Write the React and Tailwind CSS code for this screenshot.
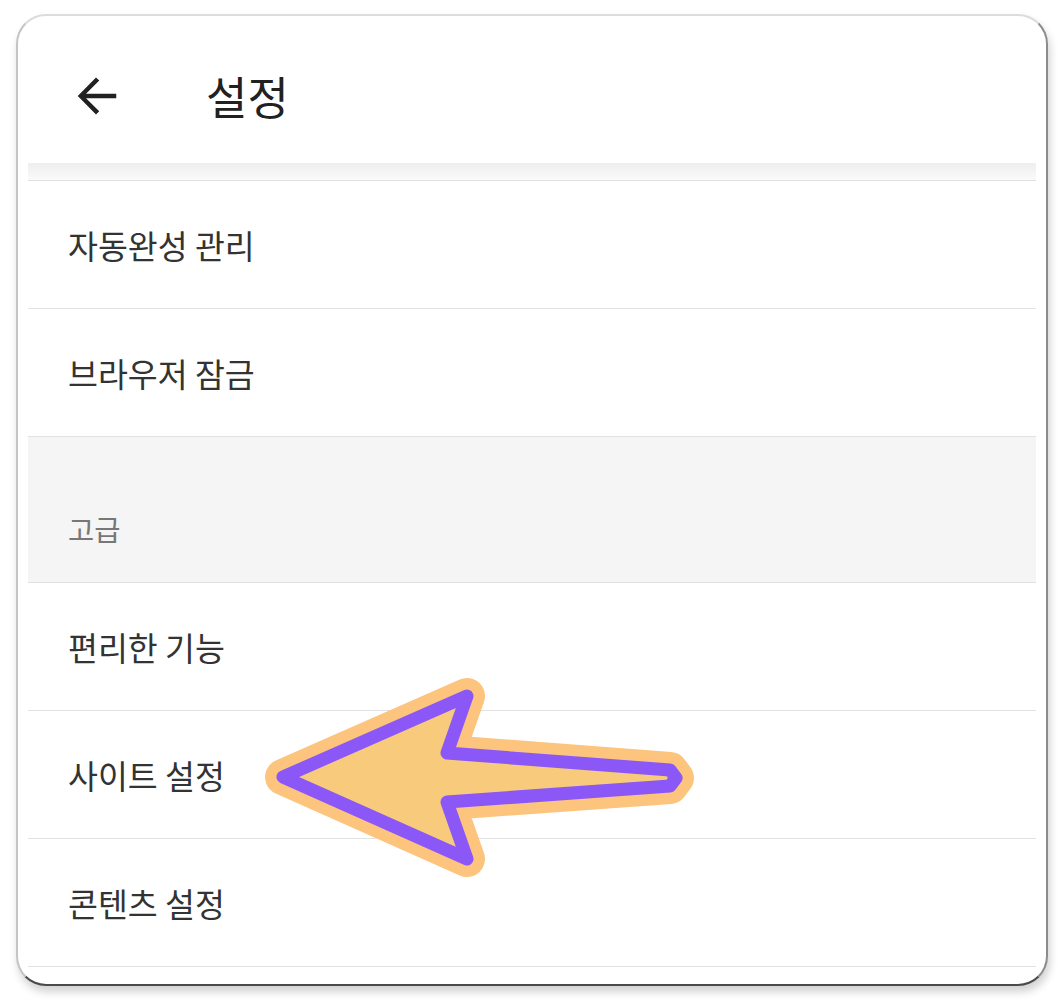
import React from "react";

const rows1 = ["자동완성 관리", "브라우저 잠금"];
const rows2 = ["편리한 기능", "사이트 설정", "콘텐츠 설정"];

function Row({ label }) {
  return (
    <div className="h-[128px] flex items-center border-b border-[#e2e2e2] pl-[40px]">
      <span className="text-[32.5px] leading-[42px] text-[#333333]">{label}</span>
    </div>
  );
}

export default function App() {
  const pts = "283,777 467,696 447,753 670,770 676,778 670,786 447,802 467,859";
  return (
    <div className="relative w-[1064px] h-[1004px] bg-white font-['Noto_Sans_CJK_KR','Noto_Sans',sans-serif] overflow-hidden">
      <div className="pt-[14px] pl-[16px]">
        <div className="w-[1032px] h-[972px] rounded-[30px] bg-white border-2 border-t-[#dcdcdc] border-l-[#c4c4c4] border-r-[#8c8c8c] border-b-[#4a4a4a] shadow-[2px_6px_8px_rgba(0,0,0,0.18)] overflow-hidden flex flex-col">
          <div className="h-[147px] pt-[12px] flex items-center shrink-0">
            <div className="w-[60px] h-[60px] ml-[49px] flex items-center justify-center">
              <svg width="60" height="60" viewBox="0 0 24 24">
                <path d="M19.7 11.1H7.6l5.3-5.3L11.6 4.6 4.3 12l7.3 7.4 1.3-1.3-5.3-5.2h12.1z" fill="#212121" />
              </svg>
            </div>
            <span className="ml-[79px] text-[45px] leading-[54px] text-[#212121]">설정</span>
          </div>
          <div className="px-[10px] flex flex-col">
            <div className="h-[18px] bg-gradient-to-b from-[#eeeeee] to-[#fafafa] border-b border-[#e0e0e0]" />
            {rows1.map((r) => (
              <Row key={r} label={r} />
            ))}
            <div className="h-[146px] bg-[#f5f5f5] border-b border-[#e0e0e0] flex items-end pl-[40px] pb-[33px]">
              <span className="text-[28.5px] leading-[40px] text-[#777777]">고급</span>
            </div>
            {rows2.map((r) => (
              <Row key={r} label={r} />
            ))}
          </div>
        </div>
      </div>
      <div className="absolute left-[245px] top-[711px] w-[443px] h-[3px] bg-white pointer-events-none" />
      <svg className="absolute left-0 top-0 pointer-events-none" width="1064" height="1004" viewBox="0 0 1064 1004">
        <polygon points={pts} fill="#f7cb7b" stroke="#fcc47d" strokeWidth="36" strokeLinejoin="round" />
        <polygon points={pts} fill="#f7cb7b" stroke="#8b57f7" strokeWidth="13" strokeLinejoin="round" />
      </svg>
    </div>
  );
}
